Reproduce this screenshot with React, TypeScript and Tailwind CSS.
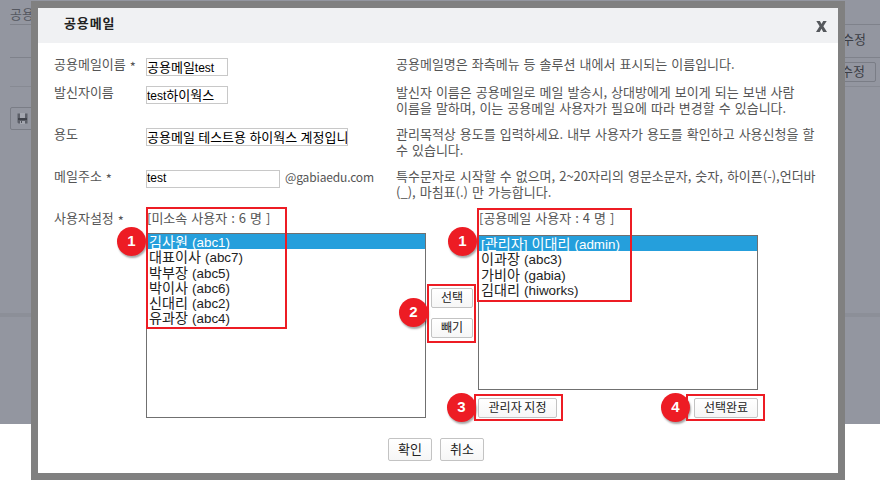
import React from "react";

const ko = "font-['Noto_Sans_CJK_KR',sans-serif]";

/** Renders Latin and Hangul runs with their own font, so each keeps its advance width. */
function Mixed({ text, hangul }: { text: string; hangul: string }) {
  return (
    <>
      {text.split(/([가-힣]+)/).map((run, i) =>
        /[가-힣]/.test(run) ? (
          <span key={i} className={`${ko} ${hangul}`}>{run}</span>
        ) : (
          <span key={i}>{run}</span>
        ),
      )}
    </>
  );
}

function Field({ value, className }: { value: string; className: string }) {
  return (
    <div
      className={`mt-[2px] h-[18px] shrink-0 overflow-hidden border border-[#c8c8c8] bg-white font-['Liberation_Sans',sans-serif] text-[12px] leading-[15px] whitespace-pre text-black [word-spacing:0] ${className}`}
    >
      <Mixed text={value} hangul="text-[13px]" />
    </div>
  );
}

function Label({ text, required }: { text: string; required?: boolean }) {
  return (
    <div className="flex w-[92px] shrink-0 gap-[4px]">
      <span>{text}</span>
      {required && <span className="pt-[3px]">*</span>}
    </div>
  );
}

function Row({
  label,
  required,
  tall,
  children,
  lines,
}: {
  label: string;
  required?: boolean;
  tall?: boolean;
  children: React.ReactNode;
  lines: string[];
}) {
  return (
    <div className={`flex items-start ${tall ? "h-[42px]" : "h-[28px]"}`}>
      <Label text={label} required={required} />
      <div className="flex w-[250px] shrink-0">{children}</div>
      <div>
        {lines.map((text) => (
          <div key={text} className="whitespace-pre">{text}</div>
        ))}
      </div>
    </div>
  );
}

function Button({ children, className }: { children: React.ReactNode; className: string }) {
  return (
    <button
      className={`flex shrink-0 items-center justify-center rounded-[2px] border border-[#c3c3c3] bg-linear-to-b from-white to-[#f6f6f6] pb-[2px] whitespace-pre text-[#222] ${className}`}
    >
      {children}
    </button>
  );
}

function ListBox({ items, className }: { items: string[]; className: string }) {
  return (
    <div className={`w-[280px] border border-[#707070] bg-white font-['Liberation_Sans',sans-serif] text-[13.4px] text-[#222] [word-spacing:0.4px] ${className}`}>
      {items.map((item, i) => (
        <div
          key={item}
          className={`h-[15.3px] pl-[2px] leading-[14px] whitespace-pre ${i === 0 ? "bg-[#259fdc] text-white" : ""}`}
        >
          <Mixed text={item} hangul="text-[14.1px]" />
        </div>
      ))}
    </div>
  );
}

function Badge({ n, className }: { n: number; className: string }) {
  return (
    <div
      className={`absolute flex size-[29px] items-center justify-center rounded-full bg-[#ed1c24] pb-[1px] font-['Liberation_Sans',sans-serif] text-[15px] font-bold text-white shadow-[1px_2px_2px_rgba(0,0,0,0.35)] ${className}`}
    >
      {n}
    </div>
  );
}

function Outline({ className }: { className: string }) {
  return <div className={`absolute border-2 border-[#ed1c24] ${className}`} />;
}

function Backdrop() {
  return (
    <div className="h-[424px] bg-[#9396a0] pl-[10px] text-[13px] text-[#3c3e45]">
      <div className="h-[25px] border-b border-[#7f828b] pt-[4px] leading-[20px] text-[#555860]">공용메일</div>
      <div className="flex h-[33px] items-center justify-end border-b border-[#7f828b] pr-[14px]">
        <span className="mt-[-4px]">수정</span>
      </div>
      <div className="flex h-[29px] items-start justify-end border-b border-[#878a93] pt-[4px] pr-[4px]">
        <div className="flex h-[20px] w-[60px] items-center justify-end rounded-[2px] border border-[#7a7d86] pr-[10px] pb-[2px]">수정</div>
      </div>
      <div className="mt-[20px] flex h-[23px] w-[80px] items-center rounded-[2px] border border-[#7a7d86] pb-[1px] pl-[6px]">
        <svg width="11" height="11" viewBox="0 0 11 11">
          <path d="M0.5 0.5H10.5V10.5H1.5L0.5 9.5Z" fill="#5d6069" />
          <path d="M3 0H8V5H3Z" fill="#a3a6af" />
          <path d="M1 5H10V7H1Z" fill="#3f424a" />
          <path d="M3 8H8V11H3Z" fill="#a3a6af" />
          <path d="M4 8H5V10H4Z" fill="#50535b" />
        </svg>
      </div>
      <div className="mt-[183px] -ml-[10px] h-[4px] bg-[#8c8f98]" />
    </div>
  );
}

export default function App() {
  return (
    <div className={`relative h-[486px] w-[880px] overflow-hidden bg-white ${ko}`}>
      <Backdrop />
      <div className="absolute top-[1px] left-[31px] h-[479px] w-[814px] border-[7px] border-[#808080] bg-white text-[13px] leading-[16px] text-[#555] [word-spacing:1.1px]">
        <div className="flex h-[35px] items-center justify-between bg-[#f0f1f3] pr-[11px] pl-[26px]">
          <h1 className="mt-[-5px] text-[13px] font-bold tracking-[0.9px] text-[#222]">공용메일</h1>
          <svg width="11" height="11" viewBox="0 0 11 11" className="mt-[2px]">
            <path d="M0.3 0H3.9L5.5 3L7.2 0H10.7L7.4 5.3L11 11H7.2L5.5 7.8L3.7 11H0L3.6 5.3Z" fill="#55585c" />
          </svg>
        </div>

        <div className="pt-[13px] pl-[16px]">
          <Row label="공용메일이름" required lines={["공용메일명은 좌측메뉴 등 솔루션 내에서 표시되는 이름입니다."]}>
            <Field value="공용메일test" className="w-[82px]" />
          </Row>
          <Row
            label="발신자이름"
            tall
            lines={[
              "발신자 이름은 공용메일로 메일 발송시, 상대방에게 보이게 되는 보낸 사람",
              "이름을 말하며, 이는 공용메일 사용자가 필요에 따라 변경할 수 있습니다.",
            ]}
          >
            <Field value="test하이웍스" className="w-[82px]" />
          </Row>
          <Row
            label="용도"
            tall
            lines={["관리목적상 용도를 입력하세요. 내부 사용자가 용도를 확인하고 사용신청을 할", "수 있습니다."]}
          >
            <Field value="공용메일 테스트용 하이웍스 계정입니" className="w-[202px]" />
          </Row>
          <Row
            label="메일주소"
            required
            tall
            lines={["특수문자로 시작할 수 없으며, 2~20자리의 영문소문자, 숫자, 하이픈(-),언더바", "(_), 마침표(.) 만 가능합니다."]}
          >
            <Field value="test" className="w-[134px]" />
            <span className="pt-[1px] pl-[5px] text-[12px] tracking-[-0.15px]">@gabiaedu.com</span>
          </Row>

          <div className="flex items-start">
            <Label text="사용자설정" required />
            <div className="w-[280px]">
              <div className="h-[23px] pl-[1px] whitespace-pre">[미소속 사용자 : 6 명 ]</div>
              <ListBox
                className="h-[185px]"
                items={["김사원 (abc1)", "대표이사 (abc7)", "박부장 (abc5)", "박이사 (abc6)", "신대리 (abc2)", "유과장 (abc4)"]}
              />
            </div>
            <div className="flex w-[52px] flex-col gap-[10px] pt-[78px] pl-[5px]">
              <Button className="h-[20px] w-[42px] text-[12px]">선택</Button>
              <Button className="h-[20px] w-[42px] text-[12px]">빼기</Button>
            </div>
            <div className="w-[280px]">
              <div className="h-[25px] pl-[1px] whitespace-pre">[공용메일 사용자 : 4 명 ]</div>
              <ListBox className="h-[155px]" items={["[관리자] 이대리 (admin)", "이과장 (abc3)", "가비아 (gabia)", "김대리 (hiworks)"]} />
              <div className="flex justify-between pt-[8px]">
                <Button className="h-[20px] w-[79px] text-[12px]">관리자 지정</Button>
                <Button className="h-[20px] w-[64px] text-[12px]">선택완료</Button>
              </div>
            </div>
          </div>
        </div>

        <div className="mt-[20px] flex gap-[8px] pl-[350px]">
          <Button className="h-[23px] w-[44px]">확인</Button>
          <Button className="h-[23px] w-[44px]">취소</Button>
        </div>
      </div>

      <Badge n={1} className="top-[227px] left-[117px]" />
      <Badge n={1} className="top-[227px] left-[448px]" />
      <Badge n={2} className="top-[298px] left-[399px]" />
      <Badge n={3} className="top-[393px] left-[447px]" />
      <Badge n={4} className="top-[393px] left-[661px]" />
      <Outline className="top-[207px] left-[146px] h-[122px] w-[141px]" />
      <Outline className="top-[208px] left-[477px] h-[94px] w-[155px]" />
      <Outline className="top-[284px] left-[427px] h-[59px] w-[49px]" />
      <Outline className="top-[394px] left-[474px] h-[27px] w-[89px]" />
      <Outline className="top-[394px] left-[686px] h-[27px] w-[79px]" />
    </div>
  );
}
